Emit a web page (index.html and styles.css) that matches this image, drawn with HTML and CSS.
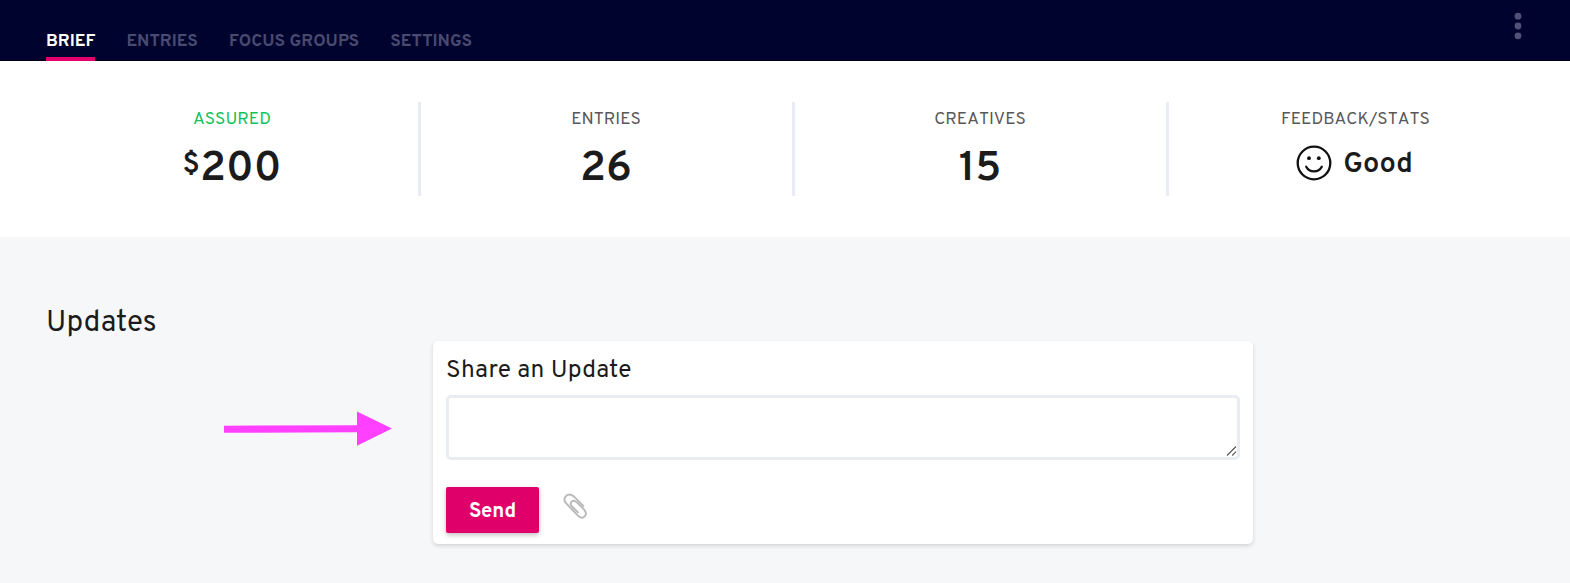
FILE: index.html
```html
<!DOCTYPE html>
<html lang="en">
<head>
    <meta charset="UTF-8">
    <meta name="viewport" content="width=device-width, initial-scale=1.0">
    <title>Brief</title>
    <link rel="stylesheet" href="styles.css">
</head>
<body>
    <header class="topbar">
        <nav class="tabs">
            <a href="#" class="tab active">BRIEF</a>
            <a href="#" class="tab">ENTRIES</a>
            <a href="#" class="tab">FOCUS GROUPS</a>
            <a href="#" class="tab">SETTINGS</a>
        </nav>
        <button type="button" class="menu-btn">
            <svg width="8" height="28" viewBox="0 0 8 28">
                <circle cx="4" cy="4.2" r="3.4"/>
                <circle cx="4" cy="14" r="3.4"/>
                <circle cx="4" cy="23.8" r="3.4"/>
            </svg>
        </button>
    </header>

    <!-- Stats -->
    <section class="stats">
        <div class="stat">
            <div class="stat-label assured">ASSURED</div>
            <div class="stat-value"><span class="currency">$</span>200</div>
        </div>
        <div class="stat">
            <div class="stat-label">ENTRIES</div>
            <div class="stat-value">26</div>
        </div>
        <div class="stat">
            <div class="stat-label">CREATIVES</div>
            <div class="stat-value">15</div>
        </div>
        <div class="stat">
            <div class="stat-label">FEEDBACK/STATS</div>
            <div class="rating">
                <svg width="36" height="36" viewBox="0 0 36 36">
                    <circle cx="18" cy="18" r="16.3" fill="none" stroke="#111" stroke-width="2.3"/>
                    <circle cx="13" cy="13.2" r="1.9" fill="#111"/>
                    <circle cx="22.8" cy="13.2" r="1.9" fill="#111"/>
                    <path d="M10.2 21.8c3.4 6.2 12.2 6.2 15.6 0" fill="none" stroke="#111" stroke-width="2.3" stroke-linecap="round"/>
                </svg>
                <span class="rating-text">Good</span>
            </div>
        </div>
    </section>

    <!-- Updates -->
    <main class="updates">
        <h2 class="updates-title">Updates</h2>
        <div class="updates-row">
            <svg class="arrow" width="170" height="36" viewBox="0 0 170 36">
                <path d="M0 14.7L133 14.2V0.6L168 17.4L133 34.8V21.2L0 21.8Z" fill="#ff40ff"/>
            </svg>
            <form class="card">
                <label for="update" class="card-title">Share an Update</label>
                <div class="field">
                    <textarea id="update" name="update"></textarea>
                    <svg class="grip" width="12" height="12" viewBox="0 0 12 12">
                        <path d="M1 10.5L10 1.5M6.2 10.5L10 6.7"/>
                    </svg>
                </div>
                <div class="actions">
                    <button type="submit" class="send-btn">Send</button>
                    <svg class="clip" width="26" height="28" viewBox="0 0 26 28">
                        <path d="M20.3 12.9L10.6 3.2C5-1.5-1.3 4.9 3 10.2L14.7 22.4C20.3 27.8 25.6 21.8 21 16.4L13.4 8.9C9.7 5.8 5.8 9.7 8.8 13.2L15 19.4"/>
                    </svg>
                </div>
            </form>
        </div>
    </main>
</body>
</html>
```
FILE: styles.css
```css
* {
    box-sizing: border-box;
}
body {
    margin: 0;
    min-height: 583px;
    font-family: Overpass, Roboto, sans-serif;
    color: #1b1b1b;
    background-color: #f5f7f9;
}

/* Top bar */
.topbar {
    display: flex;
    justify-content: space-between;
    height: 61px;
    padding: 0 48px 0 46px;
    background-color: #00032e;
    border-bottom: 1px solid #000010;
}
.tabs {
    display: flex;
    gap: 31px;
    height: 61px;
}
.tab {
    padding-top: 32px;
    font-size: 17.25px;
    line-height: 20px;
    font-weight: 700;
    color: #484a70;
    text-decoration: none;
    border-bottom: 4px solid transparent;
}
.tab.active {
    color: #fff;
    border-bottom-color: #e6006c;
}
.menu-btn {
    align-self: flex-start;
    display: flex;
    padding: 12px 0 0;
    border: none;
    background: none;
}
.menu-btn svg {
    fill: #4f5176;
}

/* Stats */
.stats {
    display: grid;
    grid-template-columns: repeat(4, 374px);
    height: 176px;
    padding: 41px 0 41px 47px;
    background-color: #fff;
}
.stat {
    padding-right: 1px;
    border-right: 3px solid #e9ecf2;
    text-align: center;
}
.stat:last-child {
    border-right: none;
}
.stat-label {
    padding-top: 8px;
    font-size: 17.3px;
    line-height: 20px;
    font-kerning: none;
    color: #58585a;
}
.stat-label.assured {
    color: #13c15b;
}
.stat-value {
    margin-top: 14px;
    font-size: 42.5px;
    line-height: 50px;
    font-weight: 600;
}
.currency {
    font-size: 29px;
    vertical-align: 8px;
    line-height: 1;
}
.rating {
    display: flex;
    justify-content: center;
    align-items: center;
    gap: 11px;
    margin: 15px 2px 0 0;
}
.rating-text {
    padding-top: 4px;
    font-size: 29px;
    line-height: 32px;
    font-weight: 600;
}

/* Updates */
.updates {
    padding: 68px 0 0 46px;
}
.updates-title {
    height: 36px;
    margin: 0;
    font-size: 29.5px;
    line-height: 38px;
    font-weight: 400;
    letter-spacing: 0.2px;
}
.updates-row {
    display: flex;
    gap: 39px;
    padding-left: 178px;
}
.arrow {
    margin-top: 70px;
}
.card {
    width: 820px;
    height: 203px;
    padding: 13px;
    background-color: #fff;
    border-radius: 5px;
    box-shadow: 0 2px 4px rgba(0, 0, 0, 0.14);
}
.card-title {
    display: block;
    padding-top: 2px;
    font-size: 24.5px;
    line-height: 30px;
    letter-spacing: 0.25px;
}
.field {
    position: relative;
    height: 65px;
    margin-top: 9px;
}
.field textarea {
    display: block;
    width: 100%;
    height: 65px;
    border: 3px solid #e9ecf1;
    border-radius: 5px;
    background-color: #fff;
    resize: none;
}
.grip {
    position: absolute;
    right: 2px;
    bottom: 3px;
    fill: none;
    stroke: #555;
    stroke-width: 1.1;
}
.actions {
    display: flex;
    gap: 24px;
    margin-top: 27px;
}
.send-btn {
    width: 93px;
    height: 46px;
    padding: 3px 0 0;
    border: none;
    border-radius: 2px;
    background-color: #df0069;
    color: #fff;
    font-family: inherit;
    font-size: 20.3px;
    font-weight: 700;
    box-shadow: 0 2px 5px rgba(0, 0, 0, 0.25);
}
.clip {
    margin-top: 6px;
    fill: none;
    stroke: #b9b9b9;
    stroke-width: 1.9;
    stroke-linecap: round;
}
```
